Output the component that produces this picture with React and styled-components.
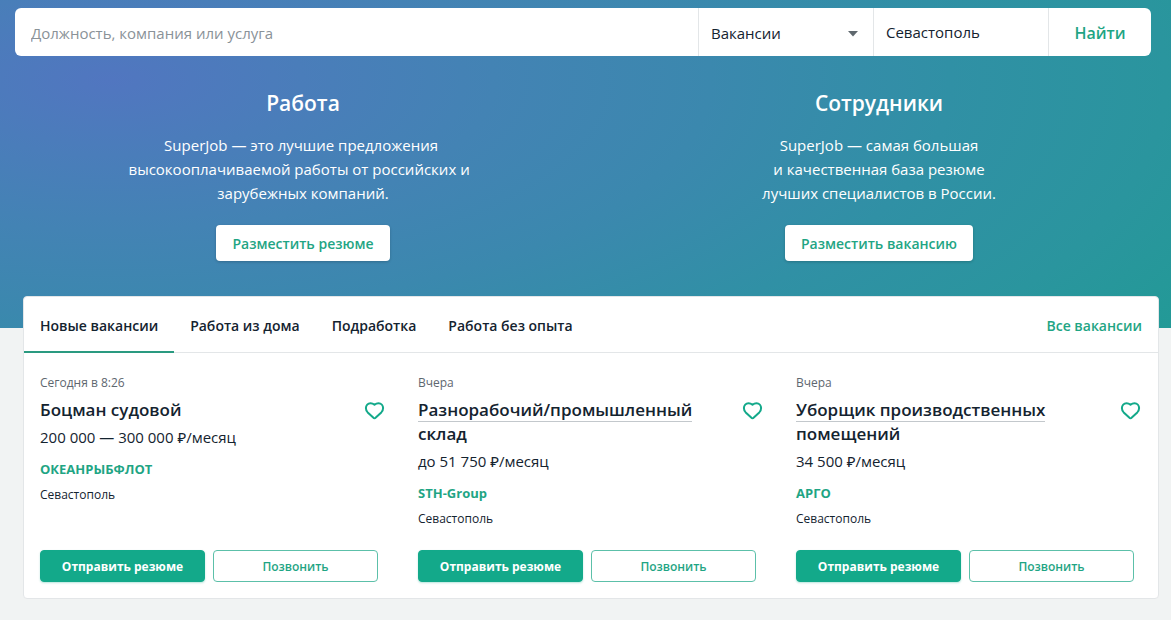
import React from "react";
import styled, { createGlobalStyle, css } from "styled-components";

const colors = {
  accent: "#13a98a",
  accentText: "#1fa584",
  tabLine: "#2a9a80",
  text: "#14232f",
  muted: "#5e676f",
  line: "#e3e6e8",
  page: "#f1f3f3",
};

const GlobalStyle = createGlobalStyle`
  *, *::before, *::after { box-sizing: border-box; }
  body {
    margin: 0;
    background: ${colors.page};
    color: ${colors.text};
    font-family: "Open Sans", "Noto Sans", "Segoe UI", sans-serif;
    font-size: 15px;
    line-height: 24px;
  }
  button, input, select { font: inherit; color: inherit; }
  h2, h3, p { margin: 0; }
  a { color: inherit; text-decoration: none; }
`;

const Hero = styled.header`
  height: 328px;
  padding: 8px 4px 0 15px;
  background: radial-gradient(
    ellipse 1200px 470px at 110px 80px,
    #5176c0 0%,
    #4a7dba 16%,
    #4383b4 32%,
    #3b88ae 50%,
    #3090a5 70%,
    #2a959e 88%,
    #229a96 104%
  );
`;

const SearchBar = styled.form`
  display: flex;
  height: 48px;
  margin-right: 16px;
  background: #fff;
  border-radius: 6px;
  overflow: hidden;
`;

const fieldStyle = css`
  min-width: 0;
  height: 48px;
  border: 0;
  outline: 0;
  background: transparent;
`;

const QueryInput = styled.input`
  ${fieldStyle}
  flex: 1;
  padding: 2px 16px 0;
  &::placeholder { color: #8a9298; opacity: 1; }
`;

const SelectBox = styled.div`
  position: relative;
  width: 175px;
  border-left: 1px solid ${colors.line};
`;

const TypeSelect = styled.select`
  ${fieldStyle}
  width: 100%;
  padding: 2px 12px 0;
  appearance: none;
`;

const Caret = styled.svg`
  position: absolute;
  right: 15px;
  top: 23px;
  pointer-events: none;
`;

const CityInput = styled.input`
  ${fieldStyle}
  width: 175px;
  padding: 0 12px;
  border-left: 1px solid ${colors.line};
`;

const FindButton = styled.button`
  ${fieldStyle}
  width: 103px;
  padding: 2px 0 0;
  border-left: 1px solid ${colors.line};
  color: ${colors.accentText};
  font-size: 16px;
  font-weight: 600;
`;

const Promos = styled.div`
  display: grid;
  grid-template-columns: 1fr 1fr;
  padding-top: 32px;
`;

const Promo = styled.section`
  display: flex;
  flex-direction: column;
  align-items: center;
  text-align: center;
  color: #fff;
`;

const PromoTitle = styled.h2`
  font-size: 21px;
  line-height: 30px;
  font-weight: 600;
`;

const PromoText = styled.p`
  margin: 15px 0 20px;
`;

const PromoButton = styled.button`
  height: 36px;
  padding: 2px 16px 0;
  border: 0;
  border-radius: 4px;
  background: #fff;
  box-shadow: 0 1px 3px rgba(0, 0, 0, 0.2);
  color: ${colors.accentText};
  font-size: 14px;
  font-weight: 600;
`;

const Panel = styled.main`
  margin: -32px 12px 21px 23px;
  background: #fff;
  border: 1px solid ${colors.line};
  border-radius: 4px;
`;

const TabBar = styled.nav`
  display: flex;
  height: 56px;
  border-bottom: 1px solid ${colors.line};
`;

const Tab = styled.a`
  height: 56px;
  padding: 17px 16px 0;
  font-size: 14px;
  font-weight: 600;
  border-bottom: 2px solid ${(p) => (p.$active ? colors.tabLine : "transparent")};
`;

const AllLink = styled(Tab)`
  margin-left: auto;
  color: ${colors.accentText};
`;

const Vacancies = styled.div`
  display: grid;
  grid-template-columns: repeat(3, 1fr);
`;

const Vacancy = styled.article`
  display: flex;
  flex-direction: column;
  min-height: 245px;
  padding: 20px 16px 16px;
`;

const Posted = styled.time`
  color: ${colors.muted};
  font-size: 12px;
  line-height: 20px;
`;

const Heading = styled.div`
  display: flex;
  justify-content: space-between;
  align-items: flex-start;
  margin-top: 5px;
`;

const Title = styled.h3`
  font-size: 17px;
  line-height: 24px;
  font-weight: 600;
`;

const TitleLine = styled.span`
  display: block;
  width: fit-content;
  height: 24px;
  box-shadow: ${(p) => (p.$underlined ? "inset 0 -1px #c3c8cc" : "none")};
`;

const LikeButton = styled.button`
  width: 24px;
  height: 24px;
  padding: 0;
  border: 0;
  background: none;
  color: ${colors.accent};
  svg { display: block; }
`;

const Salary = styled.p`
  margin-top: 3px;
`;

const Company = styled.a`
  margin-top: 8px;
  color: ${colors.accentText};
  font-size: 13px;
  font-weight: 700;
`;

const City = styled.p`
  margin-top: 2px;
  font-size: 12px;
`;

const Actions = styled.div`
  display: grid;
  grid-template-columns: 1fr 1fr;
  gap: 8px;
  margin-top: auto;
  padding-right: 8px;
`;

const Action = styled.button`
  height: 32px;
  padding: 2px 0 0;
  border: 1px solid ${(p) => (p.$filled ? colors.accent : "#5cc0a9")};
  border-radius: 4px;
  background: ${(p) => (p.$filled ? colors.accent : "#fff")};
  box-shadow: ${(p) => (p.$filled ? "0 1px 2px rgba(19, 169, 138, 0.3)" : "none")};
  color: ${(p) => (p.$filled ? "#fff" : colors.accentText)};
  font-size: 12px;
  line-height: 20px;
  font-weight: ${(p) => (p.$filled ? 700 : 600)};
`;

const Heart = () => (
  <svg width="24" height="24" viewBox="0 0 24 24" fill="none" stroke="currentColor" strokeWidth="2" strokeLinejoin="round" aria-hidden="true">
    <path d="M12.500 20.200c-.5 0-.9-.2-1.300-.6L5.700 14.400C4.300 13 3.900 11.600 3.900 10.100 3.900 7.400 5.900 5.200 8.500 5.200c1.600 0 2.500.3 4 1.600 1.500-1.300 2.400-1.600 4-1.600 2.600 0 4.600 2.200 4.600 4.900 0 1.500-.4 2.900-1.800 4.300l-5.500 5.200c-.4.4-.8.6-1.300.6Z" />
  </svg>
);

const tabs = ["Новые вакансии", "Работа из дома", "Подработка", "Работа без опыта"];

const vacancies = [
  { posted: "Сегодня в 8:26", title: ["Боцман судовой"], salary: "200 000 — 300 000 ₽/месяц", company: "ОКЕАНРЫБФЛОТ" },
  { posted: "Вчера", title: ["Разнорабочий/промышленный", "склад"], salary: "до 51 750 ₽/месяц", company: "STH-Group" },
  { posted: "Вчера", title: ["Уборщик производственных", "помещений"], salary: "34 500 ₽/месяц", company: "АРГО" },
];

const VacancyCard = ({ posted, title, salary, company }) => (
  <Vacancy>
    <Posted>{posted}</Posted>
    <Heading>
      <Title>
        <a href="#vacancy">
          {title.map((line, i) => (
            <TitleLine key={line} $underlined={i < title.length - 1}>{line}</TitleLine>
          ))}
        </a>
      </Title>
      <LikeButton type="button" aria-label="В избранное"><Heart /></LikeButton>
    </Heading>
    <Salary>{salary}</Salary>
    <Company href="#company">{company}</Company>
    <City>Севастополь</City>
    <Actions>
      <Action type="button" $filled>Отправить резюме</Action>
      <Action type="button">Позвонить</Action>
    </Actions>
  </Vacancy>
);

export default function App() {
  return (
    <>
      <GlobalStyle />
      <Hero>
        <SearchBar onSubmit={(e) => e.preventDefault()}>
          <QueryInput type="text" aria-label="Поиск" placeholder="Должность, компания или услуга" />
          <SelectBox>
            <TypeSelect aria-label="Раздел" defaultValue="Вакансии">
              <option>Вакансии</option>
            </TypeSelect>
            <Caret width="10" height="6" viewBox="0 0 10 6" aria-hidden="true">
              <path d="M0 0h10L5 5.500z" fill="#5f686e" />
            </Caret>
          </SelectBox>
          <CityInput type="text" aria-label="Город" defaultValue="Севастополь" />
          <FindButton type="submit">Найти</FindButton>
        </SearchBar>
        <Promos>
          <Promo>
            <PromoTitle>Работа</PromoTitle>
            <PromoText>
              SuperJob — это лучшие предложения{"\u00a0"}<br />
              высокооплачиваемой работы от российских и{"\u00a0\u00a0"}<br />
              зарубежных компаний.
            </PromoText>
            <PromoButton type="button">Разместить резюме</PromoButton>
          </Promo>
          <Promo>
            <PromoTitle>Сотрудники</PromoTitle>
            <PromoText>
              SuperJob — самая большая<br />
              и качественная база резюме<br />
              лучших специалистов в России.
            </PromoText>
            <PromoButton type="button">Разместить вакансию</PromoButton>
          </Promo>
        </Promos>
      </Hero>
      <Panel>
        <TabBar>
          {tabs.map((tab, i) => (
            <Tab key={tab} href="#tab" $active={i === 0}>{tab}</Tab>
          ))}
          <AllLink href="#all">Все вакансии</AllLink>
        </TabBar>
        <Vacancies>
          {vacancies.map((v) => (
            <VacancyCard key={v.company} {...v} />
          ))}
        </Vacancies>
      </Panel>
    </>
  );
}
